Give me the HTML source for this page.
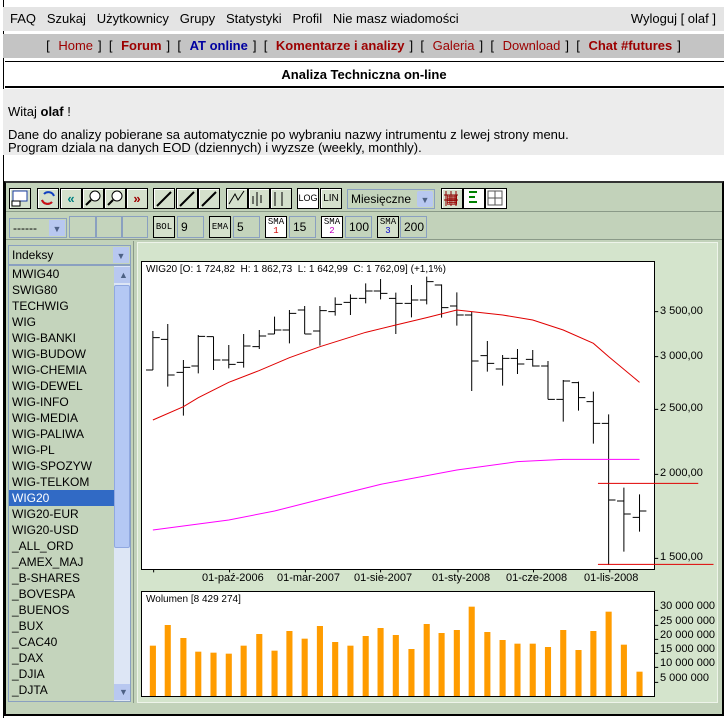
<!DOCTYPE html>
<html><head><meta charset="utf-8"><style>
*{margin:0;padding:0;box-sizing:border-box}
body{width:728px;height:718px;background:#fff;font-family:"Liberation Sans",sans-serif;position:relative;overflow:hidden;font-size:13px;color:#000}
.a{position:absolute}
.nav1{left:3px;top:7px;width:721px;height:24px;background:#e4e4e4}
.nav2{left:3px;top:34px;width:721px;height:24px;background:#c4c4c4;text-align:center;line-height:24px;font-size:13px}
.nav2 span{margin:0 5px}
.r{color:#9c0000}.b{font-weight:bold}
.grey{left:3px;top:89px;width:721px;height:66px;background:#ececec}
.tb{background:#c2d2ba}
.btn{position:absolute;top:188px;width:22px;height:21px;background:#d4e0cc;border:1px solid #000;border-right-color:#000;box-shadow:inset 1px 1px #fff}
.box{position:absolute;top:216px;height:22px;border:1px solid #8aa0c0;background:#c4d4bc;font-size:12px;line-height:20px;padding-left:3px}
.sb{position:absolute;top:216px;width:22px;height:22px;border:1px solid #000;background:#d4e0cc;font-size:9px;text-align:center;line-height:9px;font-family:"Liberation Mono",monospace}
.list div{height:16px;line-height:16px;font-size:12px;padding-left:3px}
.lbl{position:absolute;font-size:11px;white-space:nowrap}
</style></head><body>
<div class="a" style="left:3px;top:0;width:1px;height:718px;background:#000"></div>
<div class="a nav1"><span class="a" style="left:7px;top:4px">FAQ&nbsp;&nbsp;&nbsp;Szukaj&nbsp;&nbsp;&nbsp;Użytkownicy&nbsp;&nbsp;&nbsp;Grupy&nbsp;&nbsp;&nbsp;Statystyki&nbsp;&nbsp;&nbsp;Profil&nbsp;&nbsp;&nbsp;Nie masz wiadomości</span><span class="a" style="right:8px;top:4px">Wyloguj [ olaf ]</span></div>
<div class="a nav2">[ <span class="r">Home</span>] &nbsp;[ <span class="r b">Forum</span>] &nbsp;[ <span class="b" style="color:#0000a0">AT online</span>] &nbsp;[ <span class="r b">Komentarze i analizy</span>] &nbsp;[ <span class="r">Galeria</span>] &nbsp;[ <span class="r">Download</span>] &nbsp;[ <span class="r b">Chat #futures</span>]</div>
<div class="a" style="left:5px;top:61px;width:719px;height:1px;background:#000"></div>
<div class="a b" style="left:0;top:67px;width:728px;text-align:center;font-size:13px">Analiza Techniczna on-line</div>
<div class="a" style="left:5px;top:86px;width:719px;height:2px;background:#000"></div>
<div class="a grey"><div class="a" style="left:5px;top:15px">Witaj <b>olaf</b> !</div><div class="a" style="left:5px;top:39px;line-height:13px">Dane do analizy pobierane sa automatycznie po wybraniu nazwy intrumentu z lewej strony menu.<br>Program dziala na danych EOD (dziennych) i wyzsze (weekly, monthly).</div></div>

<div class="a tb" style="left:4px;top:181px;width:720px;height:535px;border:2px solid #000;border-top-color:#333"></div>
<div class="a" style="left:6px;top:211px;width:716px;height:1px;background:#8a9a88"></div>
<div class="a" style="left:6px;top:239px;width:716px;height:1px;background:#8a9a88"></div>
<!-- toolbar 1 -->
<div class="btn" style="left:9px"></div>
<div class="btn" style="left:37px"></div><div class="btn" style="left:60px;color:#008080;font-weight:bold;text-align:center;line-height:19px">«</div><div class="btn" style="left:82px"></div><div class="btn" style="left:104px"></div><div class="btn" style="left:126px;color:#a00000;font-weight:bold;text-align:center;line-height:19px">»</div>
<div class="btn" style="left:153px"></div><div class="btn" style="left:176px"></div><div class="btn" style="left:198px"></div>
<div class="btn" style="left:226px"></div><div class="btn" style="left:248px"></div><div class="btn" style="left:270px"></div>
<div class="btn" style="left:297px;background:#fff;font-size:9px;text-align:center;line-height:19px">LOG</div><div class="btn" style="left:320px;font-size:10px;text-align:center;line-height:19px">LIN</div>
<div class="a" style="left:347px;top:189px;width:88px;height:20px;border:1px solid #8aa0c0;background:#c4d4bc;font-size:12px;line-height:18px;padding-left:3px">Miesięczne<div class="a" style="right:1px;top:1px;width:16px;height:16px;background:#b8c8f0;border-radius:2px;font-size:9px;text-align:center;color:#4d6185">▼</div></div>
<div class="btn" style="left:441px;color:#a00000;text-align:center;line-height:19px">▦</div><div class="btn" style="left:463px;background:#fff"></div><div class="btn" style="left:485px;background:#fff"></div>
<svg class="a" style="left:0;top:186px" width="510" height="26">
<g stroke="#000" stroke-width="2" fill="none"><path d="M157 20L171 6M180 20L194 6M202 20L216 6"/></g>
<g stroke="#000" fill="none"><path d="M229 18L235 8L238 14L244 5M253 10V18M257 6V20M261 9V17"/><path d="M275 6V20M282 6V20"/></g>
<rect x="13" y="5" width="14" height="10" fill="#fff" stroke="#1a3ca0"/><rect x="12" y="15" width="8" height="5" fill="#fff" stroke="#000"/>
<path d="M44 8a6 6 0 0 1 10 2M52 16a6 6 0 0 1-10-2" stroke="#1040c0" stroke-width="2" fill="none"/><path d="M52 16a6 6 0 0 1-10-2" stroke="#d01010" stroke-width="2" fill="none"/>
<circle cx="95" cy="10" r="5" fill="#fff" stroke="#000"/><path d="M91 14L86 19" stroke="#000" stroke-width="2"/><circle cx="117" cy="10" r="5" fill="#fff" stroke="#000"/><path d="M113 14L108 19" stroke="#000" stroke-width="2"/>
<g fill="none" stroke-width="2"><path d="M446 5v15M451 5v15M456 5v15M444 9h14M444 14h14" stroke="#8a0000" stroke-width="1"/><path d="M469 6h8M469 11h6M469 16h8" stroke="#008000"/><path d="M488 5h14v14h-14zM495 5v14M488 12h14" stroke="#555" stroke-width="1"/></g>
</svg>
<!-- toolbar 2 -->
<div class="a" style="left:9px;top:218px;width:58px;height:20px;border:1px solid #8aa0c0;background:#c4d4bc;font-size:12px;line-height:18px;padding-left:3px">------<div class="a" style="right:1px;top:1px;width:16px;height:16px;background:#b8c8f0;font-size:9px;text-align:center;color:#4d6185">▼</div></div>
<div class="box" style="left:69px;width:27px"></div><div class="box" style="left:96px;width:26px"></div><div class="box" style="left:122px;width:26px"></div>
<div class="sb" style="left:153px;line-height:20px">BOL</div><div class="box" style="left:177px;width:27px">9</div>
<div class="sb" style="left:209px;line-height:20px">EMA</div><div class="box" style="left:233px;width:27px">5</div>
<div class="sb" style="left:265px;background:#fff;padding-top:1px">SMA<br><span style="color:#d00000">1</span></div><div class="box" style="left:289px;width:27px">15</div>
<div class="sb" style="left:321px;background:#fff;padding-top:1px">SMA<br><span style="color:#c000c0">2</span></div><div class="box" style="left:345px;width:27px">100</div>
<div class="sb" style="left:377px;padding-top:1px">SMA<br><span style="color:#0000d0">3</span></div><div class="box" style="left:400px;width:27px">200</div>
<!-- list -->
<div class="a" style="left:8px;top:245px;width:123px;height:20px;border:1px solid #8aa0c0;background:#c4d4bc;font-size:12px;line-height:18px;padding-left:3px">Indeksy<div class="a" style="right:1px;top:1px;width:16px;height:16px;background:#b8c8f0;font-size:9px;text-align:center;color:#4d6185">▼</div></div>
<div class="a list" style="left:8px;top:265px;width:123px;height:437px;border:1px solid #8aa0c0;background:#c4d4bc;overflow:hidden">
<div>MWIG40</div><div>SWIG80</div><div>TECHWIG</div><div>WIG</div><div>WIG-BANKI</div><div>WIG-BUDOW</div><div>WIG-CHEMIA</div><div>WIG-DEWEL</div><div>WIG-INFO</div><div>WIG-MEDIA</div><div>WIG-PALIWA</div><div>WIG-PL</div><div>WIG-SPOZYW</div><div>WIG-TELKOM</div><div style="background:#316ac5;color:#fff;width:105px">WIG20</div><div>WIG20-EUR</div><div>WIG20-USD</div><div>_ALL_ORD</div><div>_AMEX_MAJ</div><div>_B-SHARES</div><div>_BOVESPA</div><div>_BUENOS</div><div>_BUX</div><div>_CAC40</div><div>_DAX</div><div>_DJIA</div><div>_DJTA</div>
<div class="a" style="right:0;top:0;width:16px;height:435px;background:#dde6f5"></div>
<div class="a" style="right:0;top:1px;width:16px;height:16px;background:#b8c8f0;font-size:9px;text-align:center;color:#4d6185">▲</div>
<div class="a" style="right:0;top:19px;width:16px;height:263px;background:#b4c8f4;border:1px solid #90a8e0;border-radius:2px"></div>
<div class="a" style="right:0;bottom:1px;width:16px;height:16px;background:#b8c8f0;font-size:9px;text-align:center;color:#4d6185">▼</div>
</div>
<div class="a" style="left:133px;top:241px;width:1px;height:462px;background:#8a9a88"></div>
<!-- chart panel -->
<div class="a" style="left:137px;top:242px;width:581px;height:461px;background:#d4e4cc;border:1px solid #eef4ea"></div>
<div class="a" style="left:141px;top:261px;width:514px;height:309px;background:#fff;border:1px solid #000"></div>
<div class="a" style="left:141px;top:591px;width:514px;height:106px;background:#fff;border:1px solid #000"></div>
<svg class="a" style="left:130px;top:255px" width="598" height="460" viewBox="0 0 1568 1380" preserveAspectRatio="none">
<g stroke="#000" fill="none" vector-effect="non-scaling-stroke" stroke-width="1">
<path vector-effect="non-scaling-stroke" d="M60 228V345M42 345H60M60 248H78
M99 207V395M81 253H99M99 360H117
M140 315V482M122 352H140M140 337H158
M179 240V355M161 333H179M179 244H197
M219 245V345M201 245H219M219 315H237
M259 270V340M241 315H259M259 328H277
M298 237V338M280 322H298M298 273H316
M339 225V282M321 275H339M339 243H357
M379 185V237M361 237H379M379 225H397
M418 165V265M400 225H418M418 175H436
M458 153V237M440 165H458M458 237H476
M498 153V272M480 228H498M498 167H516
M538 127V182M520 170H538M538 148H556
M578 118V180M560 142H578M578 130H596
M618 85V145M600 130H618M618 108H636
M657 72V133M639 108H657M657 115H675
M697 113V237M679 130H697M697 145H715
M738 90V187M720 145H738M738 135H756
M778 65V148M760 135H778M778 80H796
M817 88V188M799 90H817M817 158H835
M857 112V212M839 153H857M857 180H875
M896 170V408M878 180H896M896 318H914
M937 258V350M919 302H937M937 325H955
M977 300V392M959 342H977M977 310H995
M1016 282V357M998 310H1016M1016 327H1034
M1056 285V335M1038 313H1056M1056 333H1074
M1096 318V433M1078 333H1096M1096 433H1114
M1136 375V500M1118 433H1136M1136 378H1154
M1176 380V467M1158 383H1176M1176 428H1194
M1215 410V566M1197 440H1215M1215 505H1233
M1255 478V930M1237 505H1255M1255 735H1273
M1295 698V890M1277 738H1295M1295 777H1313
M1336 718V830M1318 787H1336M1336 768H1354
M62 942V952M261 942V952M460 942V952M657 942V952M860 942V952M1058 942V952M1258 942V952
M1375 170H1385M1375 305H1385M1375 463H1385M1375 658H1385M1375 910H1385
M1375 1066H1385M1375 1111H1385M1375 1153H1385M1375 1195H1385M1375 1237H1385M1375 1282H1385"/>
</g>
<path vector-effect="non-scaling-stroke" fill="none" stroke="#e00000" d="M60 495L140 455L179 428L259 382L338 347L418 308L498 275L618 232L697 210L778 188L857 165L896 170L977 180L1056 195L1136 225L1215 265L1255 305L1336 382"/>
<path vector-effect="non-scaling-stroke" fill="none" stroke="#ff00ff" d="M60 825L259 795L379 768L538 722L657 688L857 645L1016 620L1136 613L1336 613"/>
<path vector-effect="non-scaling-stroke" fill="none" stroke="#e00000" d="M1227 685H1490M1227 928H1530"/>
<g fill="#ff9c00">
<rect x="52" y="1172" width="16" height="151"/><rect x="91" y="1110" width="16" height="213"/><rect x="132" y="1149" width="16" height="174"/><rect x="171" y="1190" width="16" height="133"/><rect x="211" y="1193" width="16" height="130"/><rect x="251" y="1196" width="16" height="127"/><rect x="290" y="1172" width="16" height="151"/><rect x="331" y="1137" width="16" height="186"/><rect x="371" y="1187" width="16" height="136"/><rect x="410" y="1128" width="16" height="195"/><rect x="450" y="1151" width="16" height="172"/><rect x="490" y="1113" width="16" height="210"/><rect x="530" y="1161" width="16" height="162"/><rect x="570" y="1172" width="16" height="151"/><rect x="610" y="1143" width="16" height="180"/><rect x="649" y="1119" width="16" height="204"/><rect x="689" y="1140" width="16" height="183"/><rect x="730" y="1182" width="16" height="141"/><rect x="770" y="1107" width="16" height="216"/><rect x="809" y="1134" width="16" height="189"/><rect x="849" y="1125" width="16" height="198"/><rect x="888" y="1055" width="16" height="268"/><rect x="929" y="1131" width="16" height="192"/><rect x="969" y="1155" width="16" height="168"/><rect x="1008" y="1166" width="16" height="157"/><rect x="1048" y="1166" width="16" height="157"/><rect x="1088" y="1176" width="16" height="147"/><rect x="1128" y="1125" width="16" height="198"/><rect x="1168" y="1185" width="16" height="138"/><rect x="1207" y="1128" width="16" height="195"/><rect x="1247" y="1070" width="16" height="253"/><rect x="1287" y="1169" width="16" height="154"/><rect x="1328" y="1250" width="16" height="73"/>
</g>
</svg>
<div class="lbl" style="left:146px;top:264px;font-size:10px">WIG20 [O: 1 724,82&nbsp; H: 1 862,73&nbsp; L: 1 642,99&nbsp; C: 1 762,09] (+1,1%)</div>
<div class="lbl" style="left:146px;top:594px;font-size:10px">Wolumen [8 429 274]</div>
<div class="lbl" style="left:660px;top:305px">3 500,00</div>
<div class="lbl" style="left:660px;top:350px">3 000,00</div>
<div class="lbl" style="left:660px;top:402px">2 500,00</div>
<div class="lbl" style="left:660px;top:467px">2 000,00</div>
<div class="lbl" style="left:660px;top:551px">1 500,00</div>
<div class="lbl" style="left:202px;top:572px">01-paź-2006</div>
<div class="lbl" style="left:277px;top:572px">01-mar-2007</div>
<div class="lbl" style="left:354px;top:572px">01-sie-2007</div>
<div class="lbl" style="left:432px;top:572px">01-sty-2008</div>
<div class="lbl" style="left:506px;top:572px">01-cze-2008</div>
<div class="lbl" style="left:584px;top:572px">01-lis-2008</div>
<div class="lbl" style="left:660px;top:600px">30 000 000</div>
<div class="lbl" style="left:660px;top:615px">25 000 000</div>
<div class="lbl" style="left:660px;top:629px">20 000 000</div>
<div class="lbl" style="left:660px;top:643px">15 000 000</div>
<div class="lbl" style="left:660px;top:657px">10 000 000</div>
<div class="lbl" style="left:660px;top:672px">5 000 000</div>
</body></html>
